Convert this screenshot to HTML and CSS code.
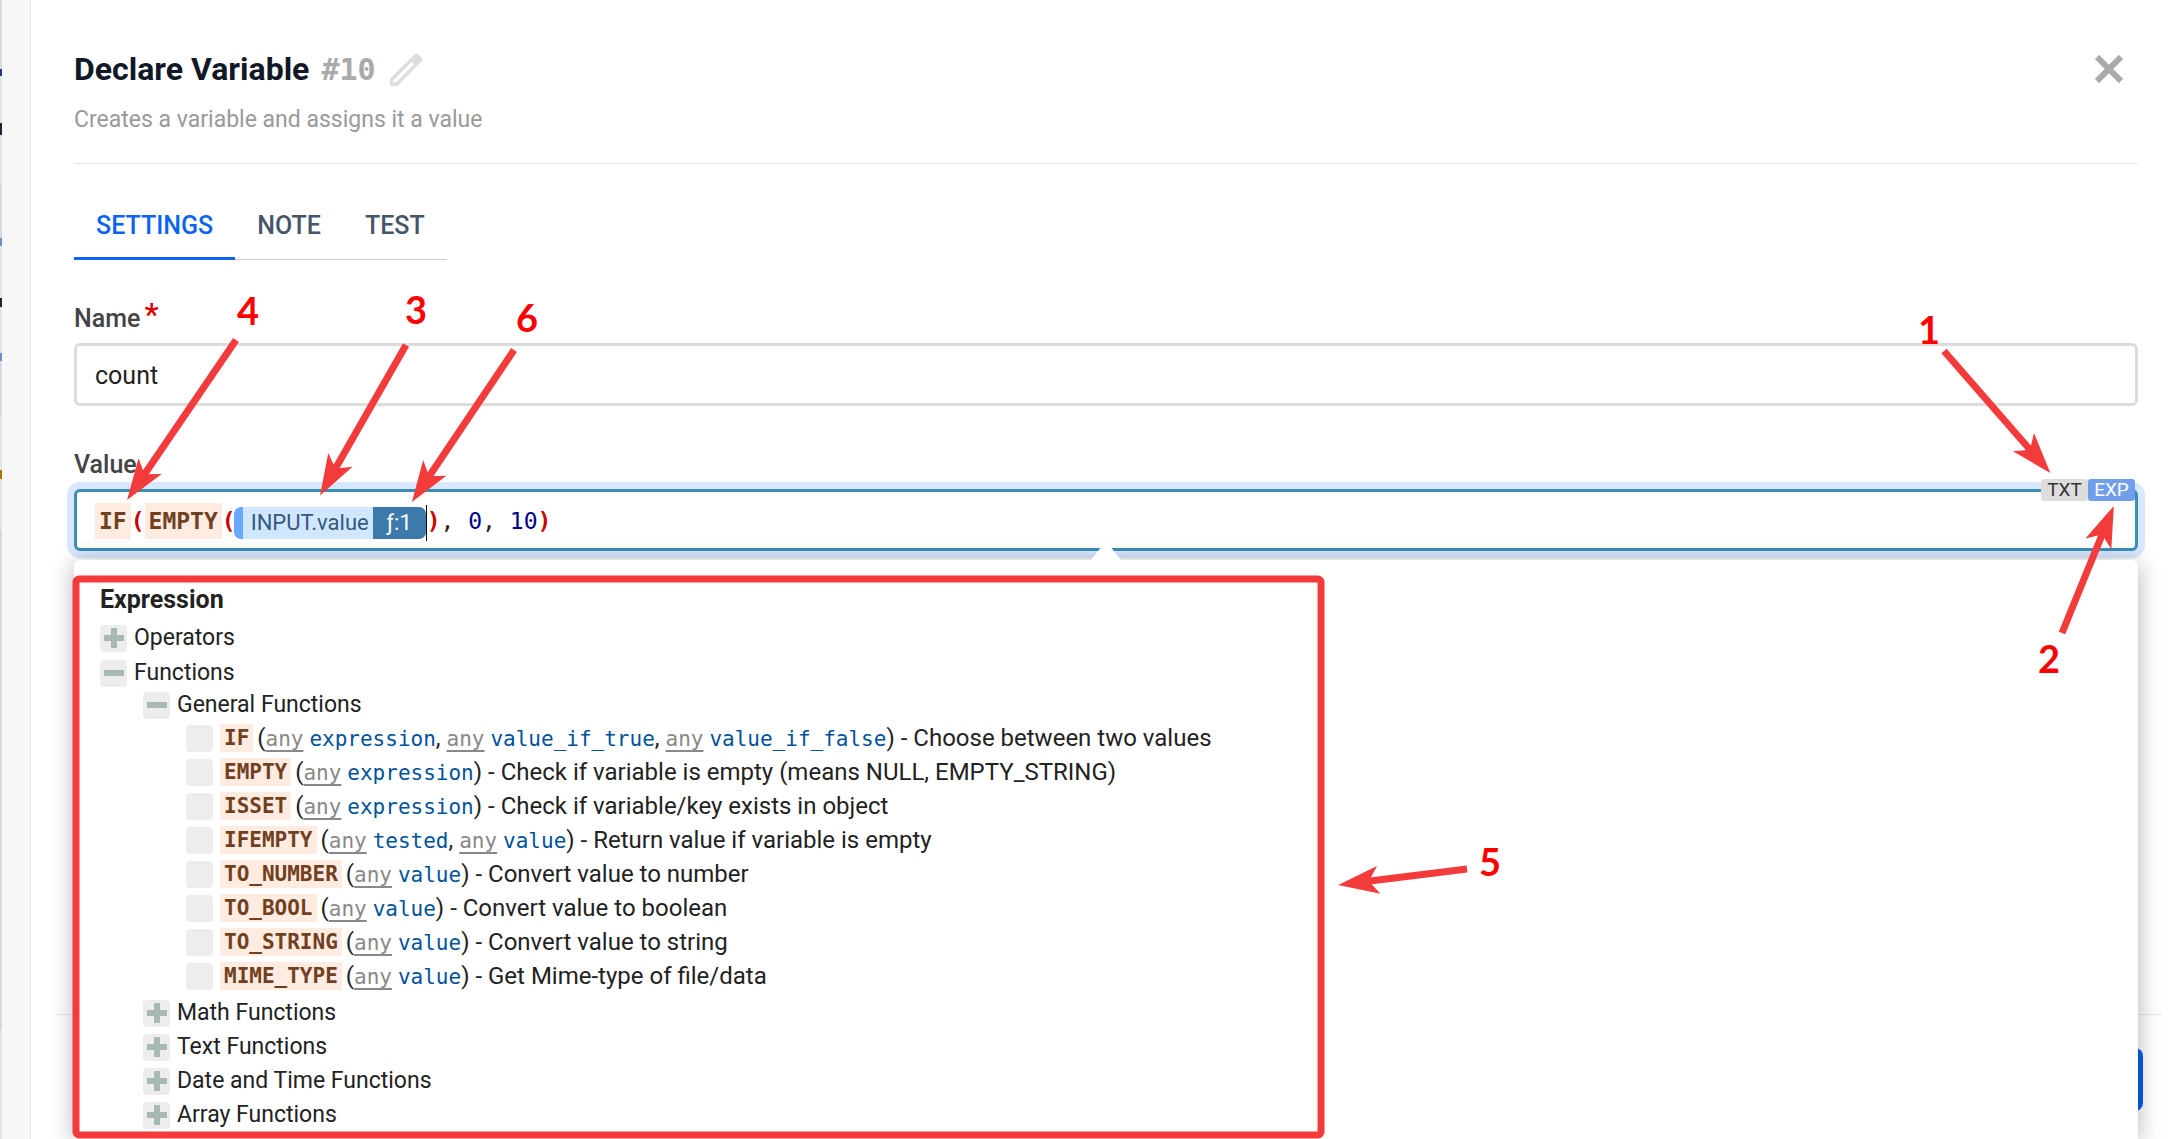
FILE: index.html
```
<!DOCTYPE html>
<html lang="en">
<head>
    <meta charset="UTF-8">
    <title>Declare Variable</title>
    <link rel="stylesheet" href="styles.css">
</head>
<body>
    <div class="backdrop"></div>
    <div class="panel">
        <header class="header">
            <div class="title-row">
                <h1>Declare Variable</h1>
                <span class="number">#10</span>
                <button class="icon-btn" aria-label="Edit title">
                    <svg class="pencil" viewBox="0 0 33 33"><path fill-rule="evenodd" d="M0 25.500 24.500 1.500Q26.500-.5 28.500 1.500L31.500 4.500Q33.500 6.500 31.500 8.500L7.500 33H0ZM3.500 27V29.500H6L23.500 12Q24.500 10.500 23 9.500 21.500 8.500 20.500 10Z"/></svg>
                </button>
                <button class="icon-btn close" aria-label="Close">
                    <svg viewBox="0 0 28 28"><path d="M2 2 26 26M26 2 2 26"/></svg>
                </button>
            </div>
            <p class="subtitle">Creates a variable and assigns it a value</p>
        </header>

        <nav class="tabs">
            <a href="#" class="on">SETTINGS</a>
            <a href="#">NOTE</a>
            <a href="#">TEST</a>
        </nav>

        <label class="label" for="name">Name<sup>*</sup></label>
        <input class="field" id="name" type="text" value="count">

        <span class="label" id="value-label">Value</span>
        <div class="editor" role="textbox" aria-labelledby="value-label">
            <span class="fn">IF</span><b>(</b><span class="fn">EMPTY</span><b>(</b><span class="pill"><span class="pill-name">INPUT.value</span><span class="pill-fn">ƒ:1</span></span><span class="caret"></span><b>)</b>, <i>0</i>, <i>10</i><b>)</b>
            <div class="mode">
                <button>TXT</button>
                <button class="on">EXP</button>
            </div>
        </div>

        <!-- suggestions -->
        <div class="popup">
            <h2>Expression</h2>
            <ul class="tree">
                <li><button class="toggle plus" aria-label="Expand"></button>Operators</li>
                <li><button class="toggle" aria-label="Collapse"></button>Functions</li>
                <li class="sub">
                    <ul>
                        <li><button class="toggle" aria-label="Collapse"></button>General Functions</li>
                        <li class="sub">
                            <ul>
                                <li><span class="leaf"></span><code class="fn">IF</code><span>(<u>any</u> <var>expression</var>, <u>any</u> <var>value_if_true</var>, <u>any</u> <var>value_if_false</var>) - Choose between two values</span></li>
                                <li><span class="leaf"></span><code class="fn">EMPTY</code><span>(<u>any</u> <var>expression</var>) - Check if variable is empty (means NULL, EMPTY_STRING)</span></li>
                                <li><span class="leaf"></span><code class="fn">ISSET</code><span>(<u>any</u> <var>expression</var>) - Check if variable/key exists in object</span></li>
                                <li><span class="leaf"></span><code class="fn">IFEMPTY</code><span>(<u>any</u> <var>tested</var>, <u>any</u> <var>value</var>) - Return value if variable is empty</span></li>
                                <li><span class="leaf"></span><code class="fn">TO_NUMBER</code><span>(<u>any</u> <var>value</var>) - Convert value to number</span></li>
                                <li><span class="leaf"></span><code class="fn">TO_BOOL</code><span>(<u>any</u> <var>value</var>) - Convert value to boolean</span></li>
                                <li><span class="leaf"></span><code class="fn">TO_STRING</code><span>(<u>any</u> <var>value</var>) - Convert value to string</span></li>
                                <li><span class="leaf"></span><code class="fn">MIME_TYPE</code><span>(<u>any</u> <var>value</var>) - Get Mime-type of file/data</span></li>
                            </ul>
                        </li>
                        <li><button class="toggle plus" aria-label="Expand"></button>Math Functions</li>
                        <li><button class="toggle plus" aria-label="Expand"></button>Text Functions</li>
                        <li><button class="toggle plus" aria-label="Expand"></button>Date and Time Functions</li>
                        <li><button class="toggle plus" aria-label="Expand"></button>Array Functions</li>
                    </ul>
                </li>
            </ul>
        </div>

        <footer class="footer">
            <button class="save" aria-label="Save"></button>
        </footer>
    </div>

    <!-- callouts, pinned to the left edge -->
    <svg class="notes notes-left" width="1520" height="1139">
        <defs>
            <marker id="head" markerUnits="userSpaceOnUse" markerWidth="42" markerHeight="30" refX="30" refY="15" orient="auto">
                <path fill="#f43b3b" d="M42 15 1 1 11 15 1 29z"/>
            </marker>
        </defs>
        <rect x="76" y="579" width="1245" height="556" rx="3"/>
        <path d="M236 340 133.800 490"/>
        <path d="M406 345 326 485"/>
        <path d="M514 350 418.600 492"/>
        <path d="M1467 869 1350 883.500"/>
        <text x="237" y="325">4</text>
        <text x="405" y="324">3</text>
        <text x="516" y="332">6</text>
        <text x="1479" y="876">5</text>
    </svg>
    <!-- callouts, pinned to the right edge -->
    <svg class="notes notes-right" width="281" height="1139">
        <path d="M44 351 142.500 464"/>
        <path d="M162 633 209.300 517"/>
        <text x="18" y="344">1</text>
        <text x="138" y="673">2</text>
    </svg>
</body>
</html>
```

FILE: styles.css
```
* {
    box-sizing: border-box;
    margin: 0;
    padding: 0;
}
body {
    display: flex;
    position: relative;
    height: 100vh;
    overflow: hidden;
    background-color: #f7f7f7;
    font: 23px/34px Roboto, sans-serif;
    color: #222;
}
button {
    border: none;
    background: none;
    font: inherit;
    cursor: pointer;
}
ul {
    list-style: none;
}
.backdrop {
    width: 2px;
    margin-right: 28px;
    background: linear-gradient(#d4dae0 69px, #1f3a93 69px 76px, #e4e4e4 76px 123px, #223 123px 135px, #e4e4e4 135px 184px, #d4dae0 184px 238px, #6a8fc8 238px 246px, #e4e4e4 246px 298px, #223 298px 307px, #e4e4e4 307px 353px, #6a8fc8 353px 361px, #d4dae0 361px 415px, #e4e4e4 415px 470px, #a70 470px 479px, #e4e4e4 479px 530px, #d4dae0 530px 1030px, #e4e4e4 1030px);
}
.panel {
    display: flex;
    flex: 1;
    flex-direction: column;
    position: relative;
    padding: 49px 43px 0 43px;
    border-left: 1px solid #e8e8e8;
    background-color: #fff;
}
.panel > * {
    flex-shrink: 0;
}

/* header */
.header {
    height: 115px;
    border-bottom: 1px solid #e6e6e6;
}
.title-row {
    display: flex;
    align-items: center;
    height: 40px;
}
h1 {
    font-size: 32px;
    font-weight: 700;
    color: #111827;
}
.number {
    margin: 0 14px 0 12px;
    font: bold 30px "DejaVu Sans Mono", monospace;
    color: #aaa;
}
.icon-btn svg {
    display: block;
    width: 33px;
    height: 33px;
    fill: #ddd;
}
.close {
    margin: 0 15px 0 auto;
}
.close svg {
    width: 28px;
    height: 28px;
    stroke: #aaa;
    stroke-width: 6;
}
.subtitle {
    margin-top: 14px;
    color: #999;
}

/* tabs */
.tabs {
    display: flex;
    width: fit-content;
    height: 96px;
    padding-top: 35px;
    border-bottom: 1px solid #ccc;
}
.tabs a {
    height: 61px;
    padding: 10px 22px 0;
    font-size: 25px;
    font-weight: 500;
    color: #475569;
    text-decoration: none;
}
.tabs .on {
    border-bottom: 3px solid #0b63f3;
    color: #0b63f3;
}

/* fields */
.label {
    display: block;
    height: 83px;
    padding-top: 42px;
    font-size: 25px;
    font-weight: 500;
    color: #444;
}
.label sup {
    margin-left: 4px;
    font-size: 32px;
    line-height: 1px;
    vertical-align: 2px;
    color: #d00;
}
.field, .editor {
    display: block;
    width: 100%;
    height: 63px;
    padding: 2px 18px 0;
    border: 3px solid #dcdcdc;
    border-radius: 6px;
    background-color: #fff;
    font: 25px Roboto, sans-serif;
    color: #222;
}
.editor {
    position: relative;
    height: 62px;
    padding-top: 0;
    border-color: #3a8fb7;
    box-shadow: 0 0 0 7px #dae8ff;
    font: 23px/58px "DejaVu Sans Mono", monospace;
    white-space: nowrap;
}
.editor b {
    color: #c00;
}
.editor i {
    font-style: normal;
    color: #00008b;
}
.fn {
    display: inline-block;
    padding: 0 4px;
    background-color: #ffebe0;
    font-weight: bold;
    line-height: 36px;
    color: #704020;
}
.pill {
    display: inline-flex;
    height: 32px;
    margin-left: -2px;
    border-left: 9px solid #69a9ff;
    border-radius: 7px;
    overflow: hidden;
    background-color: #d0e7ff;
    font: 22px/32px Roboto, sans-serif;
    color: #34597f;
    vertical-align: middle;
}
.pill-name {
    padding: 0 4px 0 8px;
}
.pill-fn {
    width: 53px;
    background-color: #3b7aab;
    text-align: center;
    color: #fff;
}
.caret {
    display: inline-block;
    width: 1px;
    height: 36px;
    background-color: #000;
    vertical-align: middle;
}
.mode {
    display: flex;
    position: absolute;
    top: -13px;
    right: 0;
}
.mode button {
    width: 47px;
    height: 22px;
    border-radius: 3px;
    background-color: #ddd;
    font: 19px/22px Roboto, sans-serif;
    color: #333;
}
.mode .on {
    background-color: #719eea;
    color: #fff;
}

/* suggestions */
.panel .popup {
    flex: 1;
    position: relative;
    z-index: 1;
    min-height: 0;
    margin-top: 9px;
    padding: 23px 26px 0;
    border-radius: 6px 6px 0 0;
    background-color: #fff;
    box-shadow: 0 3px 24px rgba(0, 0, 0, .3);
}
.popup:before {
    content: "";
    position: absolute;
    top: -19px;
    left: 50%;
    width: 30px;
    height: 19px;
    margin-left: -15px;
    background-color: #fff;
    clip-path: polygon(0 100%, 50% 0, 100% 100%);
}
h2 {
    height: 38px;
    font-size: 25px;
    font-weight: 700;
}
.tree li {
    display: flex;
    align-items: center;
    height: 34px;
    white-space: nowrap;
}
.tree > li:first-child {
    margin-bottom: 1px;
}
.tree .sub {
    display: block;
    height: auto;
    margin-top: -2px;
    padding-left: 43px;
}
.tree .sub .sub {
    margin-top: -1px;
    margin-bottom: 3px;
    font-size: 24px;
}
.toggle, .leaf {
    flex: none;
    width: 27px;
    height: 27px;
    margin-right: 7px;
    border-radius: 4px;
    background-color: #ededed;
}
.toggle {
    background-image: linear-gradient(#a8b9b4, #a8b9b4);
    background-position: center;
    background-size: 20px 6px;
    background-repeat: no-repeat;
}
.plus {
    background-image: linear-gradient(#a8b9b4, #a8b9b4), linear-gradient(#a8b9b4, #a8b9b4);
    background-size: 20px 6px, 6px 20px;
}
.tree .fn {
    margin-right: 4px;
    font: bold 21px/28px "DejaVu Sans Mono", monospace;
}
.tree u, .tree var {
    font: 21px/28px "DejaVu Sans Mono", monospace;
}
.tree u {
    color: #888;
    text-underline-offset: 4px;
}
.tree var {
    color: #00529b;
}

.footer {
    display: flex;
    justify-content: flex-end;
    position: absolute;
    right: 20px;
    bottom: 0;
    left: 26px;
    height: 125px;
    padding: 33px 18px 0 0;
    border-top: 1px solid #e6e6e6;
}
.save {
    width: 140px;
    height: 63px;
    border-radius: 8px;
    background-color: #0060f0;
}

/* callouts */
.notes {
    position: absolute;
    top: 0;
    z-index: 2;
    fill: none;
    stroke: #f43b3b;
    stroke-width: 7;
    pointer-events: none;
}
.notes path {
    marker-end: url(#head);
}
.notes marker path {
    marker-end: none;
    stroke: none;
}
.notes text {
    fill: #f00;
    stroke: none;
    font: bold 38px Lato, sans-serif;
}
.notes-left {
    left: 0;
}
.notes-right {
    right: 0;
}
```
